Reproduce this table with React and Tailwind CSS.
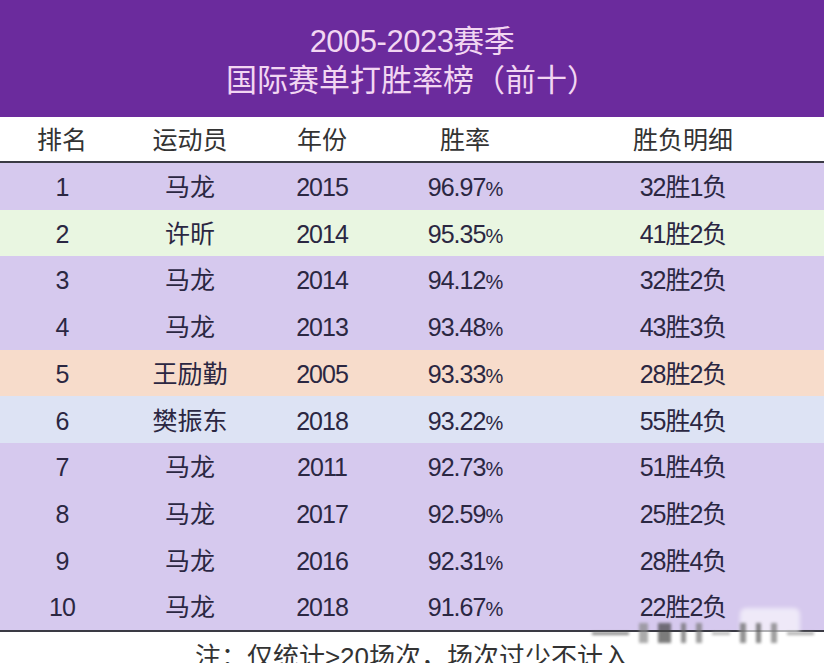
import React from 'react';

const ROWS = [
  { rank: 1, name: '马龙', year: 2015, rate: '96.97', detail: '32胜1负', bg: 'bg-[#d6c9ee]' },
  { rank: 2, name: '许昕', year: 2014, rate: '95.35', detail: '41胜2负', bg: 'bg-[#e9f6e1]' },
  { rank: 3, name: '马龙', year: 2014, rate: '94.12', detail: '32胜2负', bg: 'bg-[#d6c9ee]' },
  { rank: 4, name: '马龙', year: 2013, rate: '93.48', detail: '43胜3负', bg: 'bg-[#d6c9ee]' },
  { rank: 5, name: '王励勤', year: 2005, rate: '93.33', detail: '28胜2负', bg: 'bg-[#f7dccb]' },
  { rank: 6, name: '樊振东', year: 2018, rate: '93.22', detail: '55胜4负', bg: 'bg-[#dde3f4]' },
  { rank: 7, name: '马龙', year: 2011, rate: '92.73', detail: '51胜4负', bg: 'bg-[#d6c9ee]' },
  { rank: 8, name: '马龙', year: 2017, rate: '92.59', detail: '25胜2负', bg: 'bg-[#d6c9ee]' },
  { rank: 9, name: '马龙', year: 2016, rate: '92.31', detail: '28胜4负', bg: 'bg-[#d6c9ee]' },
  { rank: 10, name: '马龙', year: 2018, rate: '91.67', detail: '22胜2负', bg: 'bg-[#d6c9ee]' },
];

const COLS = 'grid grid-cols-[124px_132px_132px_154px_1fr] items-center text-center';
const FONT = { fontFamily: '"Liberation Sans", "Noto Sans CJK SC", sans-serif' };

export default function App() {
  return (
    <div className="relative w-[824px] h-[663px] overflow-hidden bg-white" style={FONT}>
      <div className="h-[117px] bg-[#6b2b9d] flex flex-col items-center justify-center pt-[5px] text-[#f2d6f2] text-[31px] leading-[39px]">
        <div className="tracking-[-0.5px]">2005-2023赛季</div>
        <div>国际赛单打胜率榜（前十）</div>
      </div>

      <div className={`${COLS} h-[44px] pt-[3px] text-[25px] text-[#333]`}>
        <div>排名</div>
        <div>运动员</div>
        <div>年份</div>
        <div>胜率</div>
        <div>胜负明细</div>
      </div>
      <div className="h-[2px] bg-[#3a3a44]" />

      {ROWS.map(r => (
        <div key={r.rank} className={`${COLS} h-[46.7px] pt-[3px] text-[25px] text-[#2b2742] ${r.bg}`}>
          <div className="tracking-[-1px]">{r.rank}</div>
          <div>{r.name}</div>
          <div className="tracking-[-1px]">{r.year}</div>
          <div className="tracking-[-1px]">{r.rate}<span className="text-[20px]">%</span></div>
          <div className="tracking-[-1px]">{r.detail}</div>
        </div>
      ))}
      <div className="h-[2px] bg-[#3a3a44]" />

      <div className="text-center text-[26px] text-[#333] pt-[10px] leading-[30px]">
        注：仅统计&gt;20场次，场次过少不计入
      </div>

      <div className="absolute left-[740px] top-[608px] w-[60px] h-[32px] rounded-[6px] bg-white/60 blur-[2px]" />
      <div className="absolute left-[592px] top-[620px] w-[222px] h-[26px] flex items-center gap-[10px] blur-[1.5px] opacity-70">
        <div className="w-[40px] h-[3px] bg-[#555]" />
        <div className="w-[10px] h-[20px] bg-[#888]" />
        <div className="w-[14px] h-[20px] bg-[#444]" />
        <div className="w-[6px] h-[20px] bg-[#666]" />
        <div className="w-[6px] h-[20px] bg-[#777]" />
        <div className="w-[20px] h-[3px] bg-[#999]" />
        <div className="w-[6px] h-[20px] bg-[#666]" />
        <div className="w-[6px] h-[20px] bg-[#555]" />
        <div className="w-[6px] h-[20px] bg-[#777]" />
        <div className="w-[30px] h-[3px] bg-[#888]" />
      </div>
    </div>
  );
}
